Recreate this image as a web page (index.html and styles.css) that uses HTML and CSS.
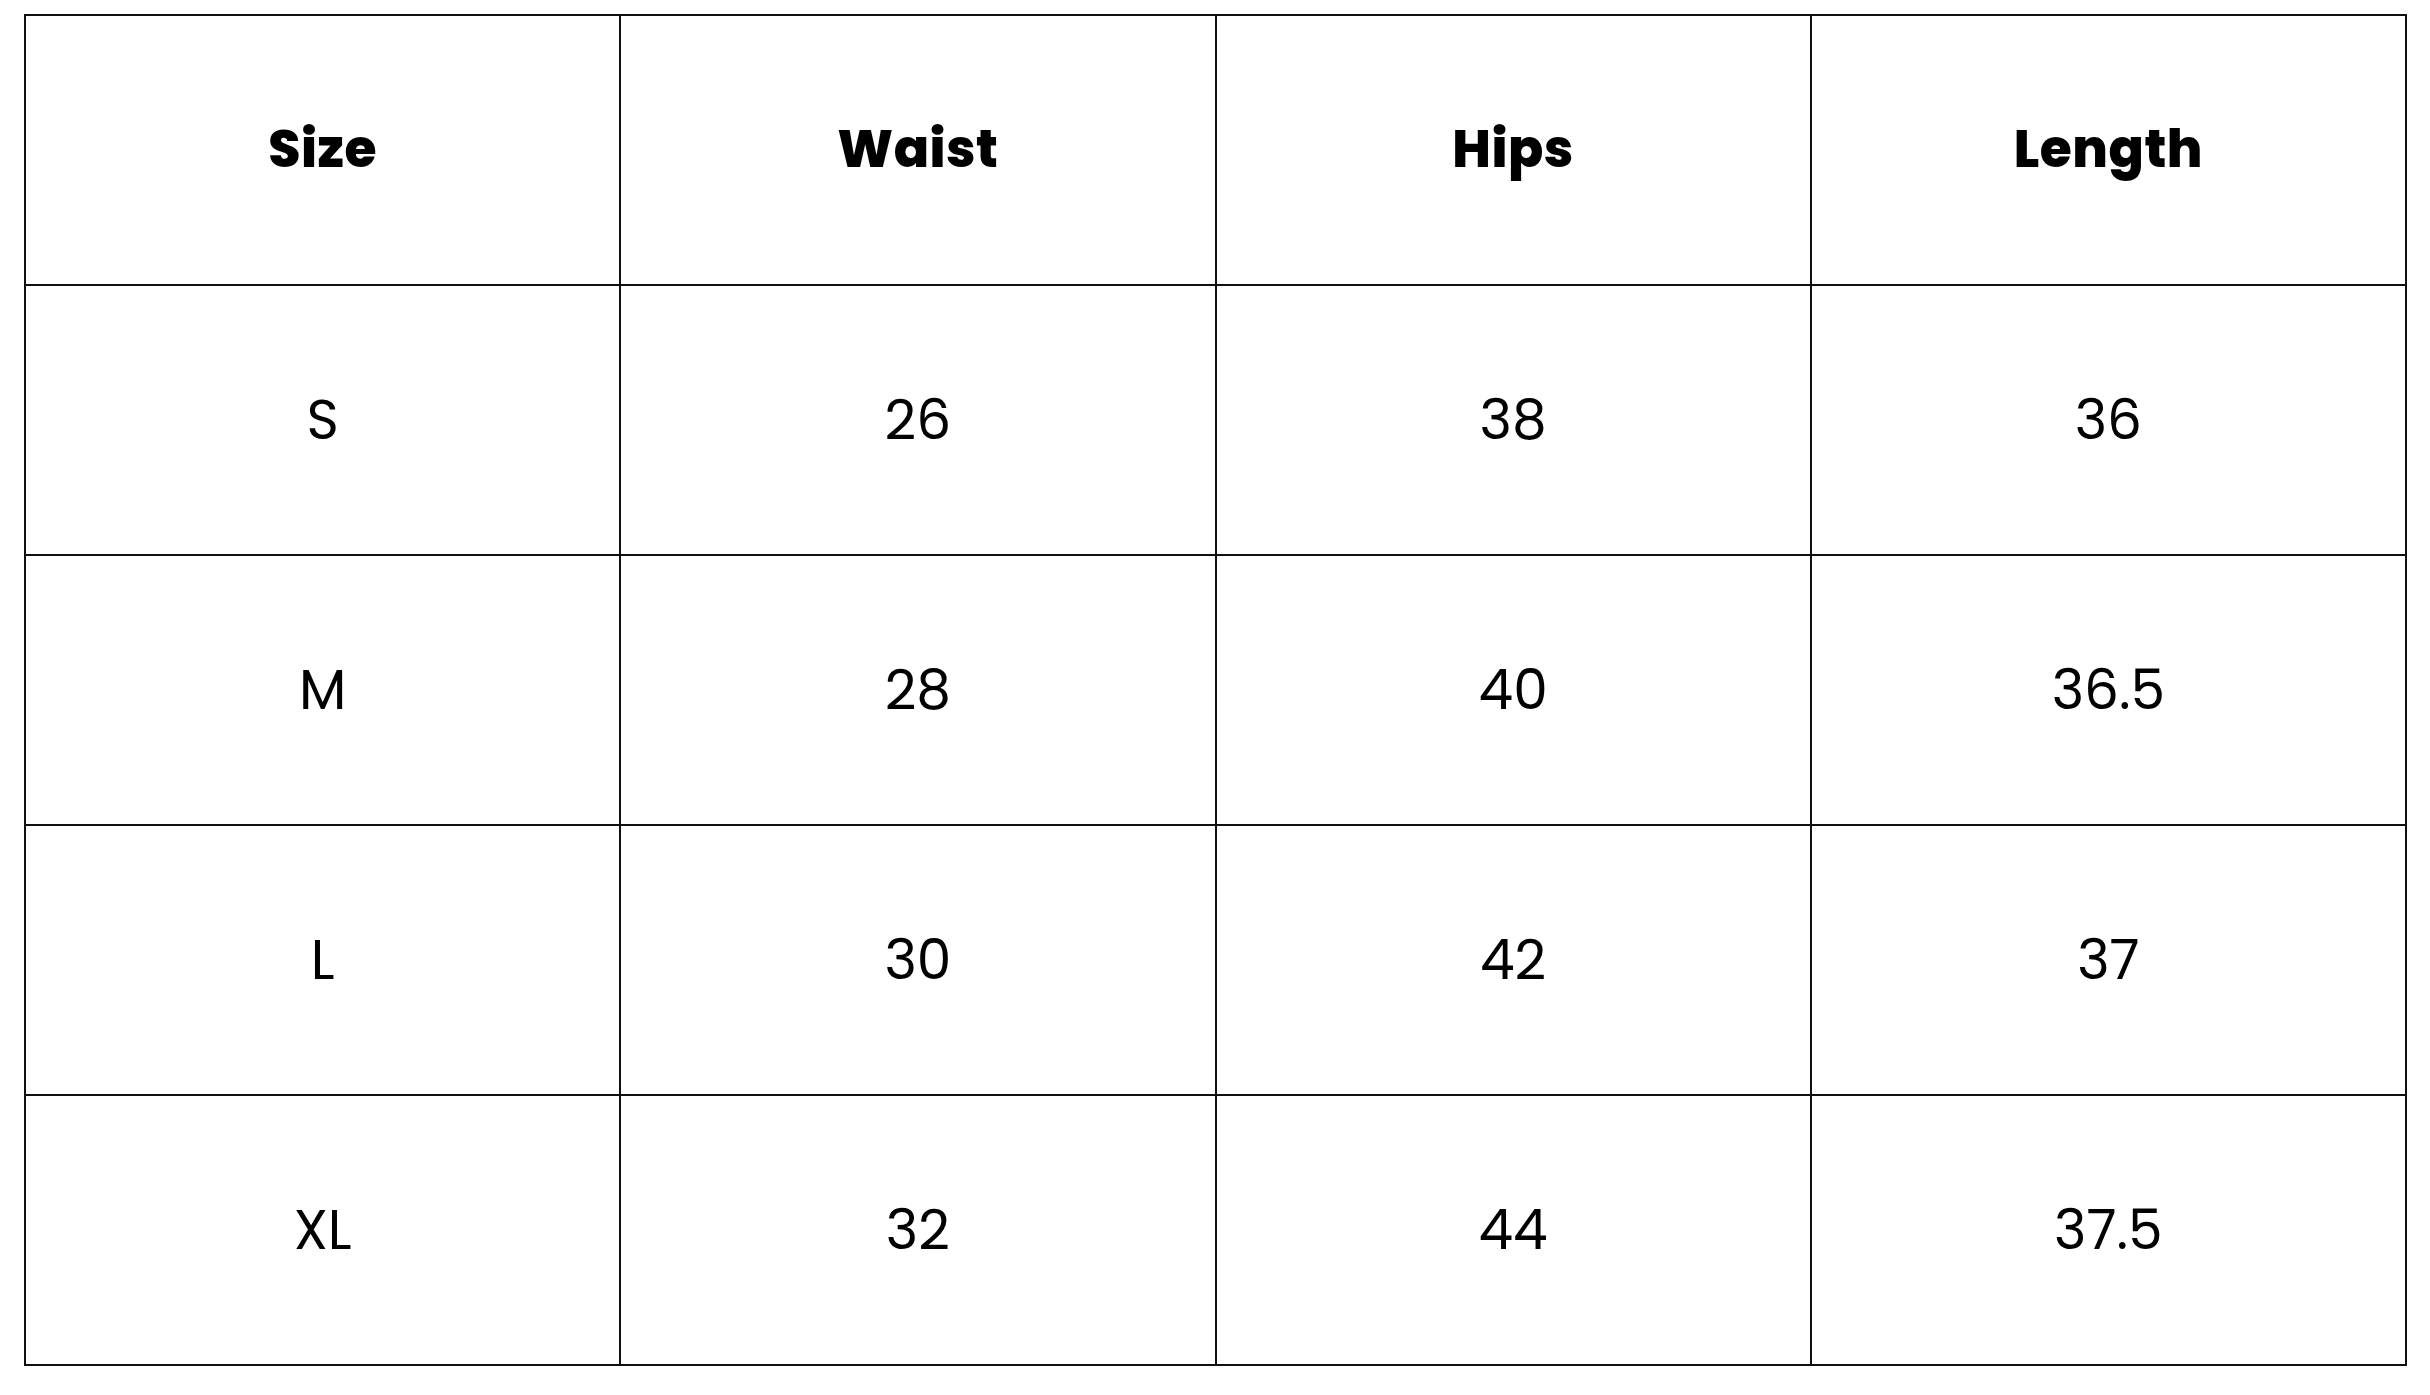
FILE: index.html
```html
<!DOCTYPE html>
<html>
<head>
<meta charset="utf-8">
<link rel="stylesheet" href="styles.css">
</head>
<body>
<div class="wrap">
<table class="size-chart">
  <thead>
    <tr><th>Size</th><th>Waist</th><th>Hips</th><th>Length</th></tr>
  </thead>
  <tbody>
    <tr><td>S</td><td>26</td><td>38</td><td>36</td></tr>
    <tr><td>M</td><td>28</td><td>40</td><td>36.5</td></tr>
    <tr><td>L</td><td>30</td><td>42</td><td>37</td></tr>
    <tr><td>XL</td><td>32</td><td>44</td><td>37.5</td></tr>
  </tbody>
</table>
</div>
</body>
</html>
```

FILE: styles.css
```css
html, body {
  margin: 0;
  padding: 0;
  background: #ffffff;
}
.wrap {
  padding: 14px 0 0 24px;
}
.size-chart {
  border-collapse: collapse;
  width: 2383px;
  table-layout: fixed;
  font-family: "Poppins", "Inter", "Noto Sans", sans-serif;
  color: #000;
}
.size-chart th,
.size-chart td {
  border: 2px solid #111;
  height: 266px;
  padding: 0 0 2px 0;
  text-align: center;
  vertical-align: middle;
}
.size-chart th {
  font-weight: 800;
  font-size: 52px;
  letter-spacing: 0.5px;
}
.size-chart td {
  font-weight: 400;
  font-size: 55px;
}
```
